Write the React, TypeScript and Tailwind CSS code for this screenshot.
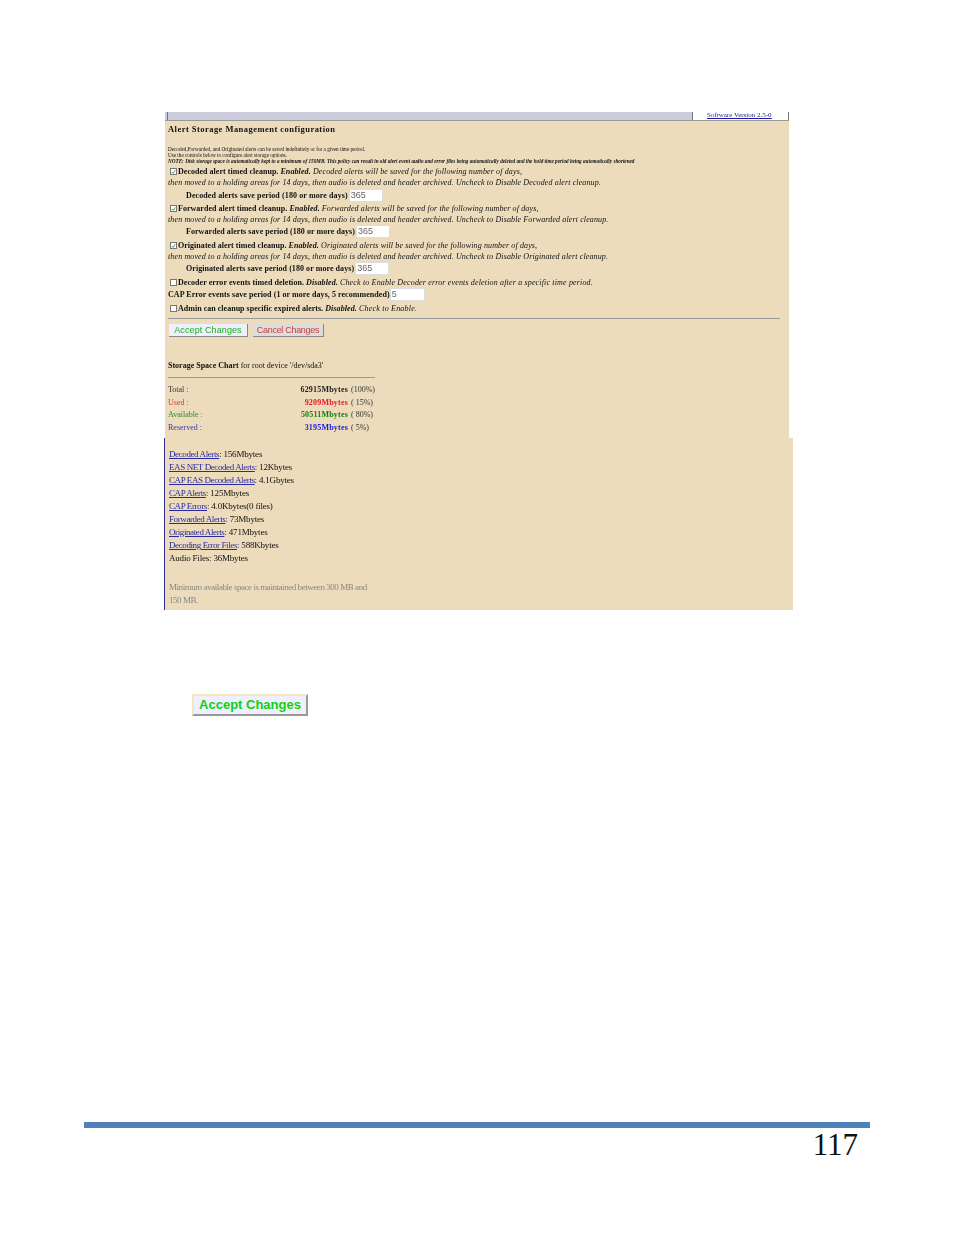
const Check = ({ checked }: { checked?: boolean }) => (
  <span className="inline-flex w-[7px] h-[7px] border border-[#777] bg-white mr-[1px] shrink-0 items-center justify-center">
    {checked && (
      <svg viewBox="0 0 7 7" className="w-[6px] h-[6px]">
        <path d="M1 3.5 L2.8 5.5 L6 1.2" fill="none" stroke="#2a8a2a" strokeWidth="1.2" />
      </svg>
    )}
  </span>
);

const Field = ({ value, width }: { value: string; width: string }) => (
  <span className={`inline-block h-[13px] bg-white border border-[#ddd] text-[#666] font-['Liberation_Sans',sans-serif] text-[9px] leading-[10px] pl-[1px] ${width}`}>
    {value}
  </span>
);

const CleanupRow = ({ name, saveRow, saveLabel }: { name: string; saveRow: string; saveLabel: string }) => (
  <>
    <div className="h-[11px] leading-[11px] flex items-center whitespace-nowrap pl-[2px] mt-[2px]">
      <Check checked />
      <span>
        <span className="font-bold tracking-[0.03px]">{name} alert timed cleanup. </span>
        <span className="italic font-bold tracking-[0.1px]">Enabled. </span>
        <span className="italic tracking-[0.13px]">{name} alerts will be saved for the following number of days,</span>
      </span>
    </div>
    <div className="h-[11px] leading-[11px] italic whitespace-nowrap tracking-[0.125px]">
      then moved to a holding areas for 14 days, then audio is deleted and header archived. Uncheck to Disable {name} alert cleanup.
    </div>
    <div className={`h-[13px] leading-[13px] flex items-center whitespace-nowrap pl-[18px] ${saveRow}`}>
      <span className={`font-bold ${saveLabel}`}>{name} alerts save period (180 or more days)</span>
      <span className="ml-[1px]"><Field value="365" width="w-[34px]" /></span>
    </div>
  </>
);

const chart = [
  { label: "Total :", value: "62915Mbytes", pct: "(100%)", color: "text-[#222]", labelColor: "text-[#333]" },
  { label: "Used :", value: "9209Mbytes", pct: "( 15%)", color: "text-[#e02020]", labelColor: "text-[#c84040]" },
  { label: "Available :", value: "50511Mbytes", pct: "( 80%)", color: "text-[#148014]", labelColor: "text-[#2a8a2a]" },
  { label: "Reserved :", value: "3195Mbytes", pct: "( 5%)", color: "text-[#1c1cdc]", labelColor: "text-[#3a3ab0]" },
];

const usage = [
  { link: "Decoded Alerts", text: "156Mbytes" },
  { link: "EAS NET Decoded Alerts", text: "12Kbytes" },
  { link: "CAP EAS Decoded Alerts", text: "4.1Gbytes" },
  { link: "CAP Alerts", text: "125Mbytes" },
  { link: "CAP Errors", text: "4.0Kbytes(0 files)" },
  { link: "Forwarded Alerts", text: "73Mbytes" },
  { link: "Originated Alerts", text: "471Mbytes" },
  { link: "Decoding Error Files", text: "588Kbytes" },
];

export default function App() {
  return (
    <div className="w-[954px] h-[1235px] bg-white relative overflow-hidden font-['Liberation_Serif',serif] text-[#111]">
      <div className="pt-[112px] pl-[164px]">
        {/* top panel */}
        <div className="ml-[1px] w-[624px] h-[326px] bg-[#ecdcbc] text-[8px] blur-[0.3px]">
          <div className="h-[9px] bg-[#ccccdc] flex border-b border-[#999]">
            <div className="ml-[2px] w-[1px] bg-[#777]" />
            <div className="flex-1" />
            <div className="w-[97px] bg-white border-l border-[#777] border-r text-[7px] leading-[7px] text-[#1a1a9a] underline pl-[14px] whitespace-nowrap">
              Software Version 2.5-0
            </div>
          </div>

          <div className="pl-[3px] pr-[10px]">
            <div className="h-[14px] mt-[1px] text-[8.5px] leading-[14px] font-bold tracking-[0.46px] whitespace-nowrap">Alert Storage Management configuration</div>
            <div className="mt-[10px] text-[5.2px] leading-[6px] whitespace-nowrap">
              <div>Decoded,Forwarded, and Originated alerts can be saved indefinitely or for a given time period.</div>
              <div>Use the controls below to configure alert storage options.</div>
              <div className="italic font-bold">NOTE: Disk storage space is automatically kept to a minimum of 150MB. This policy can result in old alert event audio and error files being automatically deleted and the hold time period being automatically shortened</div>
            </div>

            <div className="mt-[2px]">
              <CleanupRow name="Decoded" saveRow="mt-[1px] -mb-[1px]" saveLabel="tracking-[0.1px]" />
              <CleanupRow name="Forwarded" saveRow="mb-[1px]" saveLabel="tracking-[0.06px]" />
              <CleanupRow name="Originated" saveRow="mb-[1px]" saveLabel="tracking-[0.06px]" />
            </div>

            <div className="h-[11px] leading-[11px] flex items-center whitespace-nowrap pl-[2px] mt-[2px]">
              <Check />
              <span>
                <span className="font-bold tracking-[0.05px]">Decoder error events timed deletion. </span>
                <span className="italic font-bold tracking-[0.1px]">Disabled. </span>
                <span className="italic tracking-[0.16px]">Check to Enable Decoder error events deletion after a specific time period.</span>
              </span>
            </div>
            <div className="h-[13px] leading-[13px] flex items-center whitespace-nowrap">
              <span className="font-bold tracking-[0.06px]">CAP Error events save period (1 or more days, 5 recommended)</span>
              <Field value="5" width="w-[35px]" />
            </div>
            <div className="h-[11px] leading-[11px] flex items-center whitespace-nowrap pl-[2px] mt-[2px]">
              <Check />
              <span>
                <span className="font-bold tracking-[0.02px]">Admin can cleanup specific expired alerts. </span>
                <span className="italic font-bold tracking-[0.1px]">Disabled. </span>
                <span className="italic tracking-[0.2px]">Check to Enable.</span>
              </span>
            </div>

            <div className="mt-[4px] mr-[-1px] h-[1px] bg-[#999]" />

            <div className="mt-[5px] ml-[1px] flex gap-[5px] font-['Liberation_Sans',sans-serif] text-[9px]">
              <div className="h-[13px] w-[79px] leading-[12px] text-center bg-[#efefff] text-[#18b018] border-r border-b border-[#888] tracking-[0.1px] whitespace-nowrap">Accept Changes</div>
              <div className="h-[13px] w-[71px] leading-[12px] text-center bg-[#dcdcdc] text-[#c84040] border-r border-b border-[#888] tracking-[-0.3px] whitespace-nowrap">Cancel Changes</div>
            </div>

            <div className="mt-[23px] h-[11px] leading-[11px] whitespace-nowrap">
              <span className="font-bold">Storage Space Chart</span> for root device '/dev/sda3'
            </div>
            <div className="mt-[6px] w-[207px] h-[1px] bg-[#999]" />

            <div className="mt-[6px] w-[207px]">
              {chart.map((row) => (
                <div key={row.label} className="h-[12.5px] leading-[12.5px] flex whitespace-nowrap">
                  <span className={`flex-1 ${row.labelColor}`}>{row.label}</span>
                  <span className={`font-bold tracking-[0.2px] ${row.color}`}>{row.value}</span>
                  <span className="w-[27px] text-[#333] pl-[3px]">{row.pct}</span>
                </div>
              ))}
            </div>
          </div>
        </div>

        {/* lower panel */}
        <div className="w-[629px] h-[172px] bg-[#ecdcbc] border-l border-[#2a2a90] pl-[4px] pt-[10px] text-[9px] text-[#111] blur-[0.3px]">
          {usage.map((row) => (
            <div key={row.link} className="h-[13px] leading-[13px] whitespace-nowrap tracking-[-0.2px]">
              <span className="text-[#2a2aa0] underline tracking-[-0.4px]">{row.link}</span>: {row.text}
            </div>
          ))}
          <div className="h-[13px] leading-[13px] whitespace-nowrap tracking-[-0.2px]">Audio Files: 36Mbytes</div>
          <div className="mt-[16px] w-[205px] leading-[13px] text-[#888] tracking-[-0.45px]">
            Minimum available space is maintained between 300 MB and 150 MB.
          </div>
        </div>

        <div className="mt-[84px] ml-[28px] w-[116px] h-[22px] bg-[#efefff] border-2 border-[#f3e6c0] border-r-[#999] border-b-[#999] text-center font-['Liberation_Sans',sans-serif] font-bold text-[13px] leading-[17px] text-[#0fd00f] whitespace-nowrap">
          Accept Changes
        </div>
      </div>

      {/* footer */}
      <div className="absolute left-[84px] top-[1122px] w-[786px]">
        <div className="h-[6px] bg-[#4f81bd]" />
        <div className="text-right pr-[12px] text-[31px] leading-[34px] font-['Liberation_Serif',serif] text-[#111]">117</div>
      </div>
    </div>
  );
}
